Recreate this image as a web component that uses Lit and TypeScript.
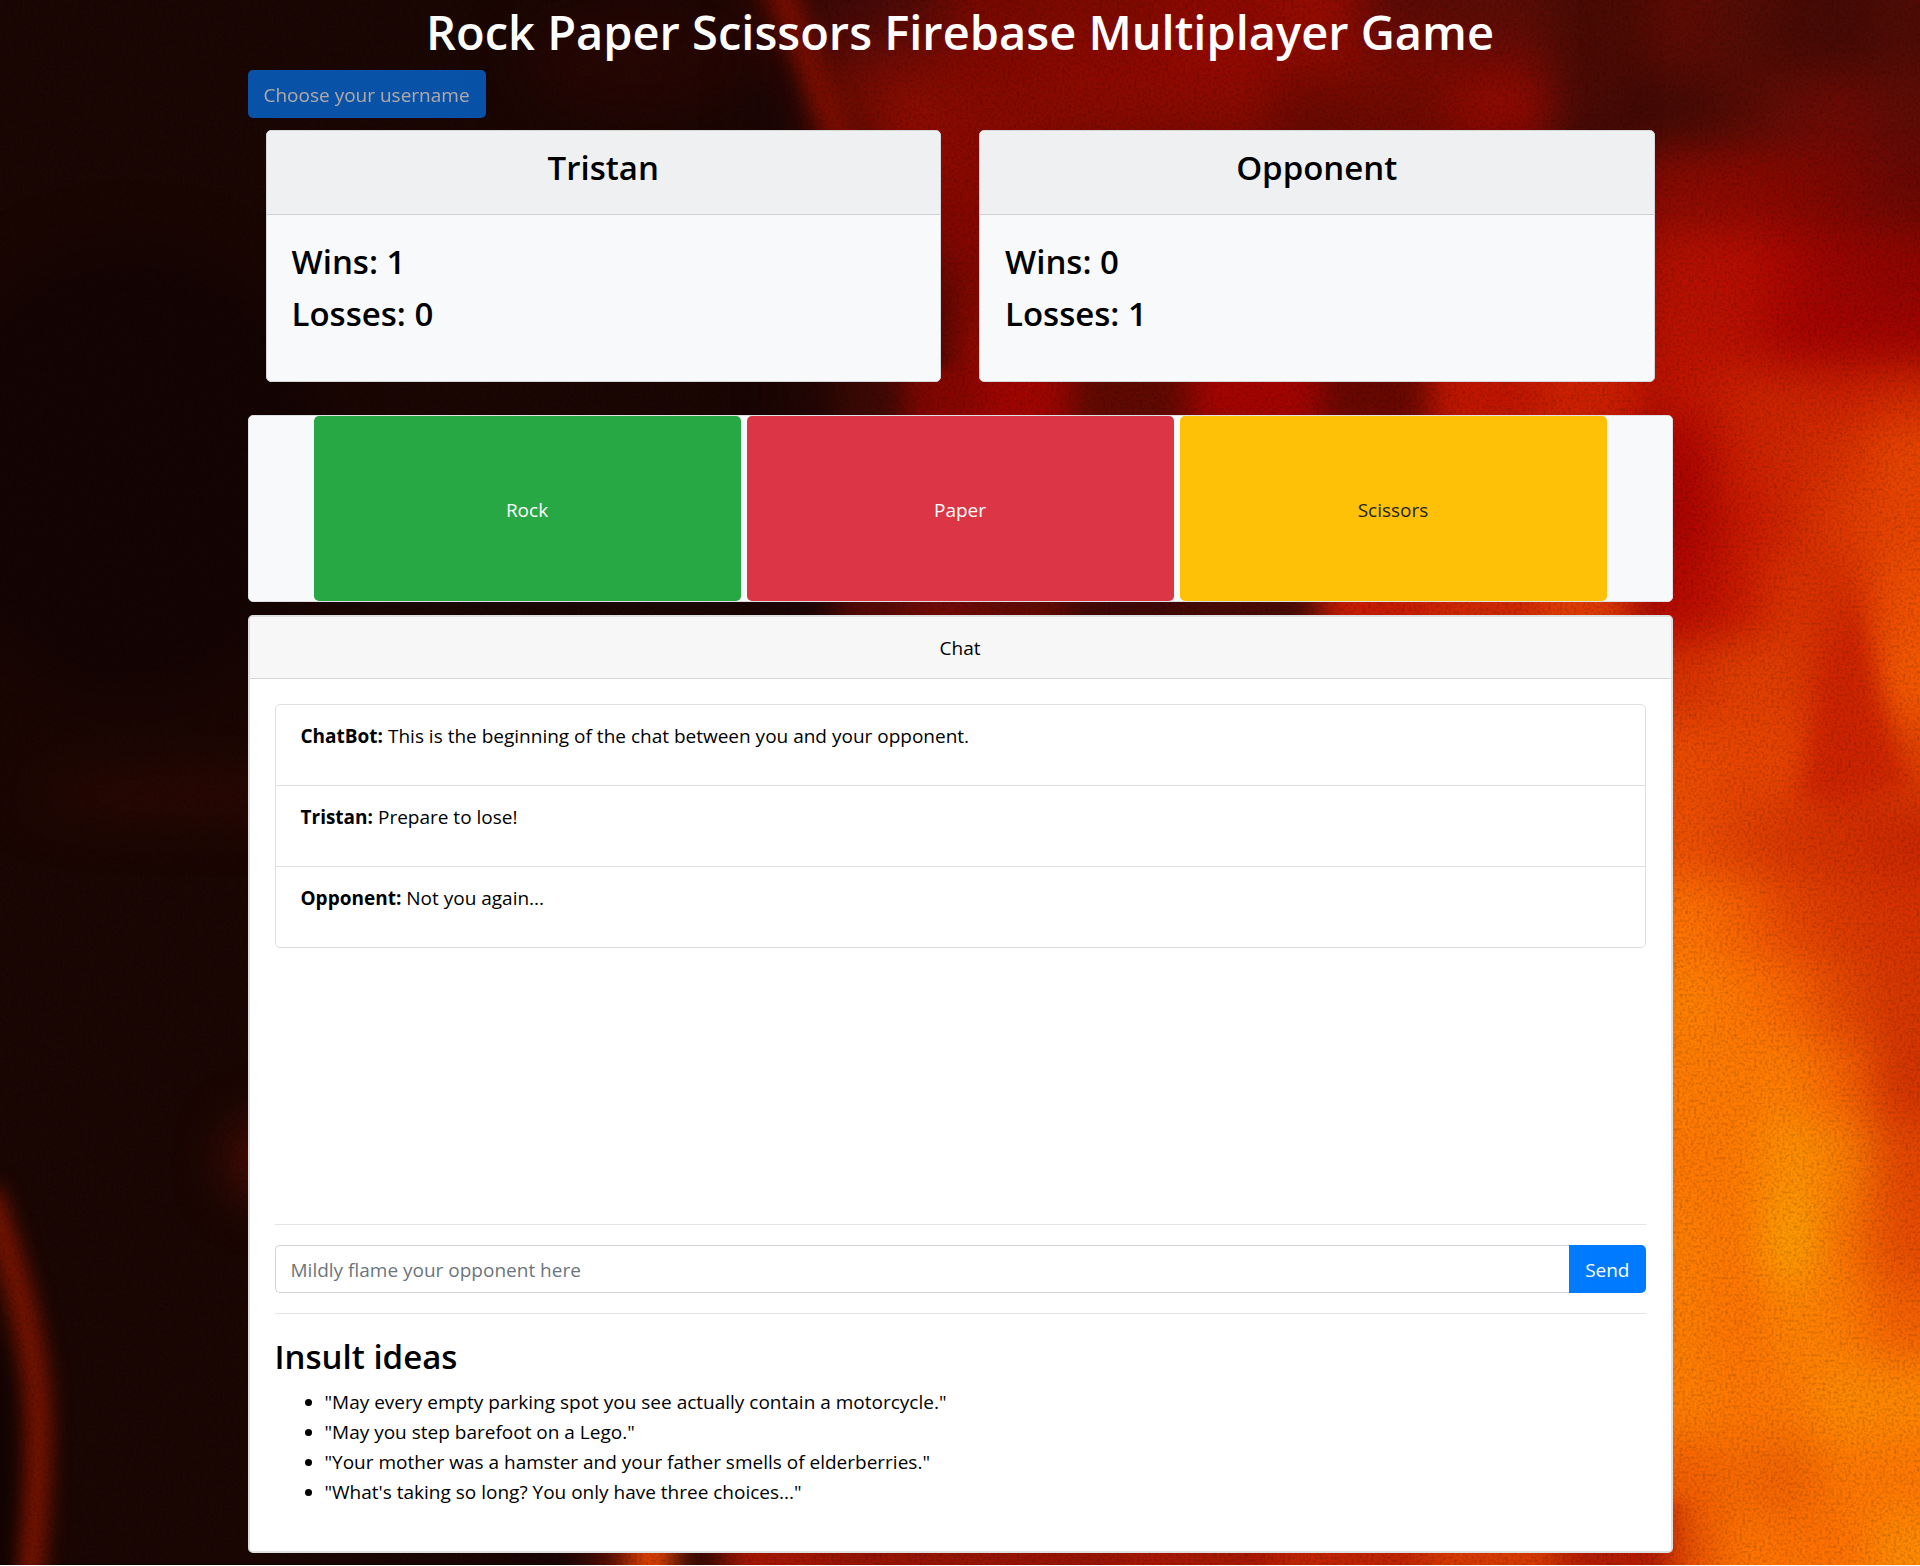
import { LitElement, html, svg, css } from "lit";
import { customElement, property, state } from "lit/decorators.js";

/** A lattice of colour samples; neighbouring samples melt together once blurred. */
interface Field {
  xs: number[];
  ys: number[];
  colors: string[];
  blur: string;
  spill: number;
}

const FIELDS: Field[] = [
  {
    xs: [780, 850, 910, 980, 1100, 1220, 1320, 1400, 1500, 1600],
    ys: [15, 60, 105, 150, 230, 300, 360],
    blur: "soft",
    spill: 30,
    colors: [
      "3a0803 400906 520a06 780900 7e0a00 8c0900 960b00 5c0a05 5a0c05 4a0b04",
      "280604 640b03 740b04 840900 8c0900 940900 8a0a00 7a0a02 720a03 4a0a04",
      "1c0504 740c02 8c0c01 860a00 8c0a00 8c0a00 6c0900 700a00 960a00 4c0a05",
      "1a0504 480702 8e0a00 8a0900 760a02 740902 660803 6c0803 740703 3c0a05",
      "180503 240502 7a0700 860700 800700 800700 800700 800700 900800 a00a00",
      "180503 200502 400602 820800 900800 900800 900800 a00800 b00c00 c01400",
      "180503 1c0502 280602 960900 900800 900800 900800 a00800 c01400 c81a00",
    ],
  },
  {
    xs: [800, 870, 940, 1020, 1120, 1260, 1380, 1480, 1600],
    ys: [398, 430, 590, 612],
    blur: "fine",
    spill: 30,
    colors: [
      "200503 3c0803 840600 a00500 600900 a40400 680700 c01600 cc2000",
      "200503 400803 900600 a00500 600900 a00500 700800 c01600 cc2000",
      "1c0503 500803 700a02 600a02 400804 500a04 c81c00 d02800 e03c00",
      "1c0503 580903 700a02 640a02 400804 480a04 c81c00 d02800 e03c00",
    ],
  },
  {
    xs: [1690, 1740, 1790, 1840, 1900],
    ys: [
      40, 110, 190, 270, 340, 395, 450, 520, 600, 680, 760, 840, 920, 1000, 1080, 1160, 1240,
      1320, 1400, 1480, 1550,
    ],
    blur: "soft",
    spill: 60,
    colors: [
      "5c0b04 550c05 4a0a04 460a04 500b05",
      "460a04 560b04 650c05 6e0a04 600b05",
      "8a0a02 8c0900 850800 7c0702 6c0803",
      "b41000 b80e00 a80600 980500 920500",
      "bc1200 b81000 a80400 a40400 a00400",
      "c01400 cc2200 cc2400 cc2000 d02800",
      "ac0500 cc1f00 d02800 d83000 e84400",
      "aa0400 c81800 d02600 e03a00 e84400",
      "b80a00 c81a00 dc3400 d42c00 f05000",
      "d83200 e24000 e03c00 cc2200 f45800",
      "ec4c00 e84400 e84400 d02400 e04000",
      "ee5000 e24200 d83600 d43000 cc2800",
      "ff7200 f86200 e84800 dc3a00 d83200",
      "ff8000 ff7600 fa6600 e44800 d63600",
      "ff7c00 ff7a00 ff7e00 f86400 d43400",
      "ff7800 ff7a00 ff9200 fc8000 e44600",
      "ff7e00 ff7600 ffa200 fa7400 e84c00",
      "ff7e00 ff7200 ff8400 ff7c00 f46000",
      "ff7e00 ff7600 ff7a00 ff8a00 ff8600",
      "f46000 f86a00 f06000 ff7800 ff7800",
      "e85000 ff7400 ff7200 ff7000 ff8a00",
    ],
  },
  {
    xs: [560, 610, 650, 696, 750, 900, 1050, 1200, 1350, 1500, 1620],
    ys: [1530, 1562],
    blur: "fine",
    spill: 30,
    colors: [
      "1a0604 500b03 f04800 300803 a41600 961400 981400 a81800 c02400 d83a00 b41c00",
      "1a0604 500b03 f04800 300803 a41600 961400 981400 a81800 c02400 d83a00 b41c00",
    ],
  },
];

/** Edges of the cells around a list of sample positions, with a spill before the first and after the last. */
function edges(points: number[], before: number, after: number): number[] {
  const out = [points[0] - before];
  for (let i = 1; i < points.length; i++) out.push((points[i - 1] + points[i]) / 2);
  out.push(points[points.length - 1] + after);
  return out;
}

function field(f: Field) {
  const ex = edges(f.xs, f.spill, f.xs[f.xs.length - 1] > 1800 ? 90 : 50);
  const ey = edges(f.ys, f.ys[0] < 60 ? 120 : 30, 90);
  return svg`<g filter="url(#${f.blur})">${f.colors.map((row, r) =>
    row.split(" ").map(
      (c, i) => svg`<rect x=${ex[i]} y=${ey[r]} width=${ex[i + 1] - ex[i] + 1}
        height=${ey[r + 1] - ey[r] + 1} fill=${"#" + c}></rect>`
    )
  )}</g>`;
}

@customElement("flame-backdrop")
export class FlameBackdrop extends LitElement {
  static styles = css`
    :host {
      display: block;
      position: absolute;
      inset: 0;
      overflow: hidden;
      background: #190603;
    }
    .flames {
      display: block;
      width: 100%;
      height: 100%;
    }
  `;

  render() {
    return html`<svg class="flames" viewBox="0 0 1920 1565" preserveAspectRatio="none" aria-hidden="true">
      <defs>
        <filter id="soft" filterUnits="userSpaceOnUse" x="-100" y="-150" width="2200" height="1850"
          color-interpolation-filters="sRGB"><feGaussianBlur stdDeviation="22"></feGaussianBlur></filter>
        <filter id="fine" filterUnits="userSpaceOnUse" x="-100" y="-150" width="2200" height="1850"
          color-interpolation-filters="sRGB"><feGaussianBlur stdDeviation="16 6"></feGaussianBlur></filter>
        <filter id="glow" filterUnits="userSpaceOnUse" x="-100" y="-150" width="2200" height="1850"
          color-interpolation-filters="sRGB"><feGaussianBlur stdDeviation="10"></feGaussianBlur></filter>
        <filter id="haze" filterUnits="userSpaceOnUse" x="-100" y="-150" width="2200" height="1850"
          color-interpolation-filters="sRGB"><feGaussianBlur stdDeviation="26"></feGaussianBlur></filter>
        <filter id="grain" x="0" y="0" width="100%" height="100%" color-interpolation-filters="sRGB">
          <feTurbulence type="fractalNoise" baseFrequency="0.35" numOctaves="2" seed="4"></feTurbulence>
          <feColorMatrix type="matrix" values="0 0 0 0 0  0 0 0 0 0  0 0 0 0 0  0 0 0 0.45 -0.19"></feColorMatrix>
        </filter>
      </defs>
      <rect width="1920" height="1565" fill="#1a0603"></rect>
      <g filter="url(#haze)">
        <ellipse cx="130" cy="470" rx="200" ry="230" fill="#140402"></ellipse>
        <ellipse cx="210" cy="795" rx="180" ry="20" fill="#300802"></ellipse>
        <ellipse cx="640" cy="60" rx="120" ry="60" fill="#260603"></ellipse>
        <ellipse cx="275" cy="1160" rx="46" ry="40" fill="#540d04"></ellipse>
      </g>
      ${FIELDS.map(field)}
      <path d="M776 -20 C800 40 820 90 850 160" fill="none" stroke="#7e0e00" stroke-width="26" filter="url(#glow)"></path>
      <path d="M-14 1190 C8 1250 38 1340 38 1430 C38 1490 34 1530 28 1590" fill="none" stroke="#7c1400"
        stroke-width="27" filter="url(#glow)"></path>
      <path d="M-40 1300 L0 1350 C14 1420 12 1500 8 1590 L-40 1590 Z" fill="#120302" filter="url(#glow)"></path>
      <path d="M1852 590 C1868 660 1886 720 1912 790 L1800 800 C1816 720 1834 650 1852 590 Z" fill="#cc2200"
        opacity="0.8" filter="url(#glow)"></path>
      <rect width="1920" height="1565" filter="url(#grain)"></rect>
    </svg>`;
  }
}

@customElement("player-card")
export class PlayerCard extends LitElement {
  @property() name = "";
  @property({ type: Number }) wins = 0;
  @property({ type: Number }) losses = 0;

  static styles = css`
    :host {
      display: block;
      flex: 1;
      box-sizing: border-box;
      overflow: hidden;
      border: 1px solid #d5d7da;
      border-radius: 5px;
      background: #f8f9fa;
    }
    .head {
      padding: 16px 25px 15px;
      background: #eff0f2;
      border-bottom: 1px solid #ced0d2;
      text-align: center;
    }
    .line {
      margin: 0 0 10px;
      font-size: 33px;
      line-height: 42px;
      font-weight: 600;
    }
    .body {
      padding: 26px 25px 36px;
    }
  `;

  render() {
    return html`
      <header class="head"><h3 class="line">${this.name}</h3></header>
      <div class="body">
        <h3 class="line">Wins: ${this.wins}</h3>
        <h3 class="line">Losses: ${this.losses}</h3>
      </div>
    `;
  }
}

@customElement("app-root")
export class AppRoot extends LitElement {
  @state() private messages = [
    { from: "ChatBot", text: "This is the beginning of the chat between you and your opponent." },
    { from: "Tristan", text: "Prepare to lose!" },
    { from: "Opponent", text: "Not you again..." },
  ];

  private ideas = [
    '"May every empty parking spot you see actually contain a motorcycle."',
    '"May you step barefoot on a Lego."',
    '"Your mother was a hamster and your father smells of elderberries."',
    '"What\'s taking so long? You only have three choices..."',
  ];

  static styles = css`
    :host {
      display: block;
      position: relative;
      font-family: "Segoe UI", "Open Sans", "Noto Sans", sans-serif;
      font-size: 19px;
      line-height: 30px;
      color: #000;
    }
    * {
      box-sizing: border-box;
    }
    button,
    input {
      font: inherit;
    }
    .page {
      position: relative;
      max-width: 1425px;
      margin: 0 auto;
      padding-bottom: 12px;
    }
    .title {
      margin: 0;
      padding: 2px 0 8px;
      font-size: 47px;
      line-height: 60px;
      font-weight: 600;
      text-align: center;
      color: #fff;
    }
    .btn {
      border: 1px solid transparent;
      border-radius: 5px;
      padding: 9px 15px 7px;
      cursor: pointer;
    }
    .username {
      display: block;
      background: #007bff;
      color: #fff;
    }
    .username:disabled {
      opacity: 0.65;
      cursor: default;
    }
    .players {
      display: flex;
      gap: 38px;
      padding: 12px 18px 33px;
    }
    .moves {
      display: flex;
      gap: 6px;
      padding: 0 65px;
      border: 1px solid #dfe1e4;
      border-radius: 5px;
      background: #f8f9fa;
    }
    .move {
      flex: 1;
      height: 185px;
      color: #fff;
    }
    .rock {
      background: #28a745;
    }
    .paper {
      background: #dc3545;
    }
    .scissors {
      background: #ffc107;
      color: #212529;
    }
    .chat {
      margin-top: 13px;
      border: 2px solid #dfe0e2;
      border-radius: 5px;
      background: #fff;
    }
    .chat-head {
      margin: 0;
      padding: 16px 25px 15px;
      background: #f7f7f7;
      border-bottom: 1px solid #d8d8d8;
      border-radius: 4px 4px 0 0;
      font-size: inherit;
      font-weight: 400;
      text-align: center;
    }
    .chat-body {
      padding: 25px 25px 44px;
    }
    .scroll {
      height: 500px;
      overflow-y: auto;
    }
    .messages {
      margin: 0;
      padding: 0;
      list-style: none;
      border: 1px solid #dfdfdf;
      border-radius: 5px;
    }
    .message {
      padding: 16px 25px 34px;
    }
    .message + .message {
      border-top: 1px solid #dfdfdf;
    }
    .text {
      margin: 0;
    }
    .rule {
      margin: 20px 0;
      border: 0;
      border-top: 1px solid #e4e4e4;
    }
    .composer {
      display: flex;
    }
    .field {
      flex: 1;
      min-width: 0;
      padding: 9px 15px 7px;
      border: 1px solid #ced4da;
      border-right: 0;
      border-radius: 5px 0 0 5px;
      background: #fff;
      color: #495057;
    }
    .field::placeholder {
      color: #6c757d;
      opacity: 1;
    }
    .send {
      border-radius: 0 5px 5px 0;
      background: #007bff;
      color: #fff;
    }
    .subtitle {
      margin: 0 0 9px;
      padding-top: 2px;
      font-size: 33px;
      line-height: 42px;
      font-weight: 600;
    }
    .ideas {
      margin: 0;
      padding-left: 50px;
    }
  `;

  private send(e: Event) {
    e.preventDefault();
    const box = this.renderRoot.querySelector<HTMLInputElement>("#message")!;
    const text = box.value.trim();
    if (!text) return;
    this.messages = [...this.messages, { from: "Tristan", text }];
    box.value = "";
  }

  render() {
    return html`
      <flame-backdrop></flame-backdrop>
      <main class="page">
        <h1 class="title">Rock Paper Scissors Firebase Multiplayer Game</h1>
        <button class="btn username" disabled>Choose your username</button>
        <section class="players">
          <player-card name="Tristan" wins="1" losses="0"></player-card>
          <player-card name="Opponent" wins="0" losses="1"></player-card>
        </section>
        <section class="moves">
          <button class="btn move rock">Rock</button>
          <button class="btn move paper">Paper</button>
          <button class="btn move scissors">Scissors</button>
        </section>
        <section class="chat">
          <h2 class="chat-head" id="chat-title">Chat</h2>
          <div class="chat-body">
            <div class="scroll">
              <ul class="messages">
                ${this.messages.map(
                  (m) => html`<li class="message"><p class="text"><strong>${m.from}:</strong> ${m.text}</p></li>`
                )}
              </ul>
            </div>
            <hr class="rule" />
            <form class="composer" @submit=${this.send}>
              <input class="field" id="message" type="text" aria-labelledby="chat-title"
                placeholder="Mildly flame your opponent here" autocomplete="off" />
              <button class="btn send" type="submit">Send</button>
            </form>
            <hr class="rule" />
            <h3 class="subtitle">Insult ideas</h3>
            <ul class="ideas">
              ${this.ideas.map((t) => html`<li>${t}</li>`)}
            </ul>
          </div>
        </section>
      </main>
    `;
  }
}
